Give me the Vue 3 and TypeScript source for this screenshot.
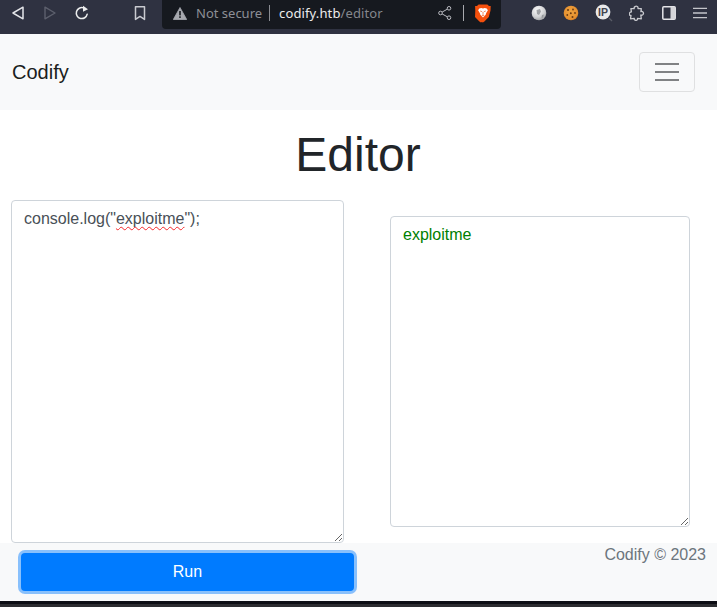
<script setup lang="ts">
const title: string = 'Editor'
</script>

<template>
  <div class="page">
    <header class="chrome">
      <div class="nav-icons">
        <svg class="ic" width="16" height="16" viewBox="0 0 16 16"><path d="M13 2.200v11.600L3 8z" fill="none" stroke="#e4e5e9" stroke-width="1.500" stroke-linejoin="round"/></svg>
        <svg class="ic fwd" width="16" height="16" viewBox="0 0 16 16"><path d="M3 2.200v11.600L13 8z" fill="none" stroke="#5d606d" stroke-width="1.400" stroke-linejoin="round"/></svg>
        <svg class="ic reload" width="16" height="16" viewBox="0 0 16 16"><path d="M13.200 9.200A5.500 5.500 0 1 1 9.600 2.900" fill="none" stroke="#eceded" stroke-width="1.500" stroke-linecap="round"/><path d="M9 .8l5 3.400-5 2.600z" fill="#eceded"/></svg>
        <svg class="ic bookmark" width="16" height="16" viewBox="0 0 16 16"><path d="M3.500 1.800h9v12.600L8 11.400l-4.500 3z" fill="none" stroke="#c9cad0" stroke-width="1.500" stroke-linejoin="round"/></svg>
      </div>
      <div class="urlbar">
        <svg class="warn" width="14" height="13" viewBox="0 0 14 13"><path d="M7 .5l6.700 12H.3z" fill="#a6a8ae" stroke="#a6a8ae" stroke-width=".8" stroke-linejoin="round"/><rect x="6.200" y="4" width="1.600" height="4.400" fill="#16191f"/><rect x="6.200" y="9.300" width="1.600" height="1.600" fill="#16191f"/></svg>
        <span class="notsec">Not secure</span>
        <span class="sep"></span>
        <span class="url"><b>codify.htb</b><i>/editor</i></span>
        <span class="spacer"></span>
        <svg class="share" width="14" height="14" viewBox="0 0 14 14"><g fill="none" stroke="#b9bac0" stroke-width="1"><circle cx="2.500" cy="7" r="1.800"/><circle cx="11" cy="2.300" r="1.800"/><circle cx="11" cy="11.700" r="1.800"/><path d="M4.100 6.100l5.300-3M4.100 7.900l5.300 3"/></g></svg>
        <span class="sep2"></span>
        <svg class="brave" width="16" height="19" viewBox="0 0 16 19"><path d="M3.600.4h8.800l1.600 1.700 1.700-.2-.2 4.700-1.700 6.400-4.400 4.500-1.500.9-1-.4-1 .4-1.500-.9-4.400-4.500L.3 6.600.1 1.900l1.900.2z" fill="#f4500d"/><path d="M4.300 4.400l2-.5L8 4.500l1.700-.6 2 .5 1.200 1.800-1.800 3-.4 1.600L8 13.600 5.300 10.800l-.4-1.600-1.800-3z" fill="#fff"/><path d="M5.200 7l2 .7M10.800 7l-2 .7M6.800 11.600h2.400M8 8v3.400" stroke="#f08050" stroke-width=".9" fill="none"/></svg>
      </div>
      <div class="ext-icons">
        <svg width="16" height="16" viewBox="0 0 16 16"><defs><radialGradient id="g1" cx=".4" cy=".3" r=".8"><stop offset="0" stop-color="#fafafa"/><stop offset=".6" stop-color="#cfd0d2"/><stop offset="1" stop-color="#8f9194"/></radialGradient></defs><circle cx="8" cy="8" r="7.300" fill="url(#g1)"/><path d="M5.500 5l3.500-1 1 2.500-2 3.500-2-1zM11 10l2-.6-1 3-1.500.6z" fill="#85888c" opacity=".75"/></svg>
        <svg width="16" height="16" viewBox="0 0 16 16"><defs><radialGradient id="g2" cx=".45" cy=".4" r=".65"><stop offset="0" stop-color="#eea33f"/><stop offset=".8" stop-color="#e58f2e"/><stop offset="1" stop-color="#c56f1e"/></radialGradient></defs><circle cx="8" cy="8" r="7.300" fill="url(#g2)"/><g fill="#6b3b12"><circle cx="5" cy="5" r="1"/><circle cx="10" cy="4.500" r=".9"/><circle cx="7.800" cy="8.300" r="1"/><circle cx="12" cy="8" r=".9"/><circle cx="4.300" cy="10" r=".9"/><circle cx="9.500" cy="12" r="1"/></g></svg>
        <svg width="18" height="18" viewBox="0 0 18 18"><circle cx="8" cy="8" r="7.400" fill="#e8e9ea"/><path d="M14 14l3 3" stroke="#5a5d67" stroke-width="1.200"/><text x="8" y="11.600" text-anchor="middle" font-family="Liberation Sans, sans-serif" font-weight="700" font-size="10.500" fill="#42454f">IP</text></svg>
        <svg width="16" height="16" viewBox="0 0 16 16"><path d="M6 1.600c1.700-1 3.500.2 3 2h3.300l-.4 3c1.700-.6 3.300 1.100 2.200 2.800-.7 1-1.700.9-2.300.6l.5 3.800-3.800-.4c.4 1.500-1 2.400-2.400 1.800-1-.4-1-1.300-.8-1.800l-3.800.4.500-3.500C.7 10.900-.3 9.200.6 7.800c.8-1 1.700-.9 1.800-.9L1.900 3.600l3.300.1C5 3 5.200 2.100 6 1.600z" fill="none" stroke="#c9cacf" stroke-width="1.300" stroke-linejoin="round"/></svg>
        <svg class="panel" width="14" height="14" viewBox="0 0 14 14"><rect x=".8" y=".8" width="12.400" height="12.400" rx="1" fill="none" stroke="#e4e4e8" stroke-width="1.500"/><rect x="8.500" y="1" width="4.500" height="12" fill="#d5d5d9"/></svg>
        <svg class="menu" width="14" height="12" viewBox="0 0 14 12"><path d="M0 1.300h14M0 6h14M0 10.700h14" stroke="#c4c5ca" stroke-width="1.300"/></svg>
      </div>
    </header>

    <nav class="navbar">
      <a class="brand">Codify</a>
      <button class="toggler" type="button" aria-label="Toggle navigation">
        <span></span><span></span><span></span>
      </button>
    </nav>

    <main class="main">
      <h1>{{ title }}</h1>
      <div class="editor-row">
        <div class="box code">console.log("<span class="typo">exploitme</span>");</div>
        <div class="box output">exploitme</div>
      </div>
    </main>

    <footer class="footer">
      <button class="run" type="button">Run</button>
      <span class="copy">Codify © 2023</span>
    </footer>
    <div class="edge"></div>
  </div>
</template>

<style>
html, body { margin: 0; padding: 0; background: #fff; overflow: hidden; }
</style>

<style scoped>
.page {
  width: 717px;
  height: 607px;
  display: flex;
  flex-direction: column;
  font-family: "Liberation Sans", Arial, sans-serif;
  color: #212529;
  overflow: hidden;
}
.chrome {
  height: 34px;
  flex: none;
  box-sizing: border-box;
  background: #2f3241;
  display: flex;
  align-items: flex-start;
}
.nav-icons {
  width: 162px;
  flex: none;
  height: 26px;
  display: flex;
  align-items: center;
  padding-left: 10px;
  box-sizing: border-box;
}
.ic { flex: none; }
.fwd { margin-left: 16px; }
.reload { margin-left: 16px; }
.bookmark { margin-left: 42px; }
.urlbar {
  width: 339px;
  height: 29px;
  flex: none;
  box-sizing: border-box;
  background: #16191f;
  border-radius: 0 0 4px 4px;
  padding: 0 10px 3px 11px;
  display: flex;
  align-items: center;
  font-family: "Noto Sans", sans-serif;
  font-size: 13px;
}
.notsec { color: #8d8f96; margin-left: 9px; }
.sep { width: 1px; height: 16px; background: #8a8c92; margin: 0 9px 0 7px; }
.url { letter-spacing: .12px; }
.url b { font-weight: 400; color: #eceded; }
.url i { font-style: normal; color: #85878d; }
.spacer { flex: 1; }
.share { margin-right: 11px; }
.sep2 { width: 1px; height: 16px; background: #a8a9ae; margin-right: 11px; }
.brave { flex: none; }
.ext-icons {
  flex: 1;
  height: 26px;
  display: flex;
  align-items: center;
  padding-left: 30px;
  gap: 16px;
}
.ext-icons svg { flex: none; }
.panel { margin-left: 1px; }
.menu { margin-left: 1px; }
.navbar {
  height: 76px;
  flex: none;
  box-sizing: border-box;
  background: #f8f9fa;
  padding: 0 22px 0 12px;
  display: flex;
  align-items: center;
  justify-content: space-between;
}
.brand { font-size: 20px; line-height: 30px; color: #1a1d20; }
.toggler {
  width: 56px;
  height: 40px;
  box-sizing: border-box;
  padding: 0;
  background: transparent;
  border: 1px solid #dfe0e1;
  border-radius: 4px;
  display: flex;
  flex-direction: column;
  align-items: center;
  justify-content: center;
  gap: 6px;
}
.toggler span { display: block; width: 24px; height: 2px; background: #808284; }
.main { flex: 1; min-height: 0; }
h1 {
  margin: 16px 0 16.400px;
  padding-right: 1px;
  text-align: center;
  font-size: 48px;
  line-height: 57.600px;
  font-weight: 400;
  color: #212529;
}
.editor-row {
  display: flex;
  align-items: flex-start;
  padding-left: 11px;
  gap: 46px;
}
.box {
  box-sizing: border-box;
  background: #fff;
  border: 1px solid #ced4da;
  border-radius: 4px;
  padding: 6px 12px;
  font-size: 16px;
  line-height: 24px;
  resize: both;
  overflow: auto;
  flex: none;
}
.code { width: 333px; height: 343px; color: #495057; }
.typo {
  text-decoration: underline wavy #f5282a 1.200px;
  text-decoration-skip-ink: none;
  text-underline-offset: 2px;
}
.output { width: 300px; height: 311px; margin-top: 16px; color: #008000; }
.footer {
  height: 58px;
  flex: none;
  box-sizing: border-box;
  background: #f8f9fa;
  padding: 0 11px 0 21px;
  display: flex;
  align-items: flex-start;
  justify-content: space-between;
}
.run {
  width: 333px;
  height: 38px;
  margin-top: 10px;
  background: #007bff;
  color: #fff;
  border: 0;
  border-radius: 4px;
  box-shadow: 0 0 0 3px rgba(0, 123, 255, .45);
  font: 16px/24px "Liberation Sans", Arial, sans-serif;
}
.copy { font-size: 16px; line-height: 24px; color: #6c757d; }
.edge { height: 6px; flex: none; background: linear-gradient(#0c0d14 50%, #2c2c30 50%); }
</style>
